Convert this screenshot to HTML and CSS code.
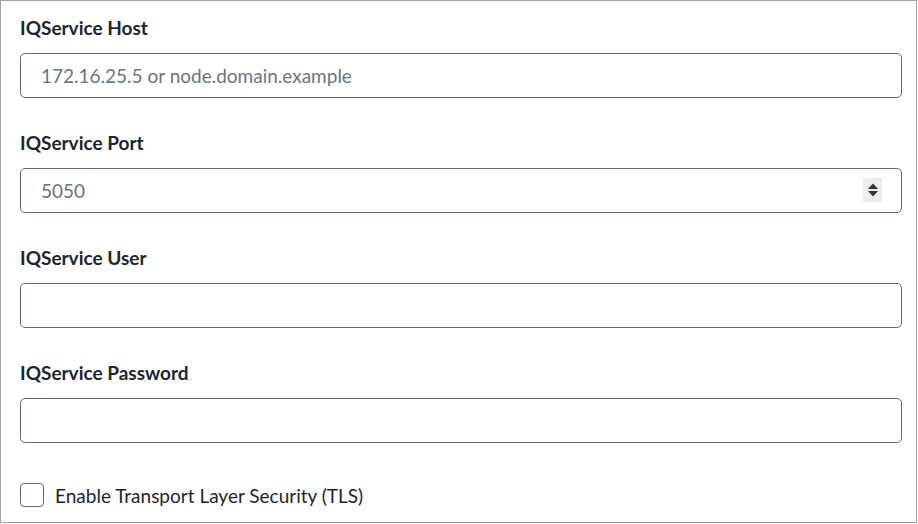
FILE: index.html
```html
<!DOCTYPE html>
<html lang="en">
<head>
  <meta charset="UTF-8">
  <title>IQService Settings</title>
  <link rel="stylesheet" href="styles.css">
</head>
<body>
  <div class="panel">
    <div class="field">
      <label for="host">IQService Host</label>
      <input type="text" id="host" placeholder="172.16.25.5 or node.domain.example">
    </div>

    <div class="field">
      <label for="port">IQService Port</label>
      <div class="number-wrap">
        <input type="number" id="port" placeholder="5050">
        <span class="spinner">
          <svg width="12" height="18" viewBox="0 0 12 18">
            <path d="M6 2.5 L11 8 L1 8 Z" fill="#333"/>
            <path d="M1 10 L11 10 L6 15.5 Z" fill="#333"/>
          </svg>
        </span>
      </div>
    </div>

    <div class="field">
      <label for="user">IQService User</label>
      <input type="text" id="user">
    </div>

    <div class="field">
      <label for="password">IQService Password</label>
      <input type="password" id="password">
    </div>

    <label class="check">
      <input type="checkbox" id="tls">
      <span>Enable Transport Layer Security (TLS)</span>
    </label>
  </div>
</body>
</html>
```

FILE: styles.css
```css
body {
  margin: 0;
  font-family: Lato, "Open Sans", sans-serif;
  color: #1d2530;
  background: #fff;
}

.panel {
  box-sizing: border-box;
  width: 917px;
  height: 523px;
  border: 1px solid #a3a3a3;
  padding: 14px 14px 0 19px;
}

.field {
  margin-bottom: 32px;
}

.field label {
  display: block;
  font-size: 19px;
  font-weight: bold;
  line-height: 26px;
  margin-bottom: 12px;
}

.field input {
  display: block;
  width: 100%;
  height: 45px;
  box-sizing: border-box;
  border: 1px solid #5f6b79;
  border-radius: 5px;
  padding: 0 20px;
  font-family: inherit;
  font-size: 19px;
  color: #1d2530;
  background: #fff;
}

.field input::placeholder {
  color: #6b7480;
}

.field input:focus {
  outline: none;
}

.number-wrap {
  position: relative;
}

.number-wrap input {
  -moz-appearance: textfield;
}

.number-wrap input::-webkit-inner-spin-button,
.number-wrap input::-webkit-outer-spin-button {
  -webkit-appearance: none;
  margin: 0;
}

.spinner {
  position: absolute;
  right: 20px;
  top: 10px;
  width: 19px;
  height: 24px;
  background: #ededed;
  display: flex;
  align-items: center;
  justify-content: center;
}

.check {
  display: flex;
  align-items: center;
  gap: 11px;
  margin-top: 40px;
  font-size: 19px;
}

.check input {
  appearance: none;
  -webkit-appearance: none;
  width: 24px;
  height: 24px;
  margin: 0;
  border: 1px solid #5f6b79;
  border-radius: 4px;
  background: #fff;
}
```
